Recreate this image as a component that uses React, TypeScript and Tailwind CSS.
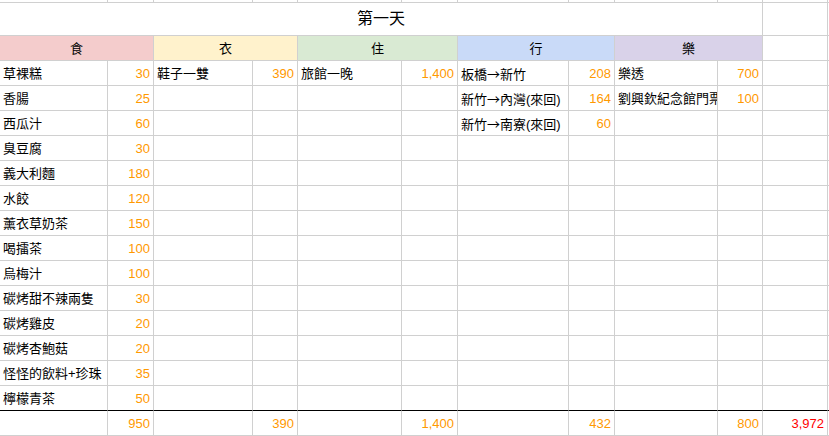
import React from "react";

type Row = [string, string, string, string, string, string, string, string, string, string];

const rows: Row[] = [
  ["草裸糕", "30", "鞋子一雙", "390", "旅館一晚", "1,400", "板橋→新竹", "208", "樂透", "700"],
  ["香腸", "25", "", "", "", "", "新竹→內灣(來回)", "164", "劉興欽紀念館門票", "100"],
  ["西瓜汁", "60", "", "", "", "", "新竹→南寮(來回)", "60", "", ""],
  ["臭豆腐", "30", "", "", "", "", "", "", "", ""],
  ["義大利麵", "180", "", "", "", "", "", "", "", ""],
  ["水餃", "120", "", "", "", "", "", "", "", ""],
  ["薰衣草奶茶", "150", "", "", "", "", "", "", "", ""],
  ["喝擂茶", "100", "", "", "", "", "", "", "", ""],
  ["烏梅汁", "100", "", "", "", "", "", "", "", ""],
  ["碳烤甜不辣兩隻", "30", "", "", "", "", "", "", "", ""],
  ["碳烤雞皮", "20", "", "", "", "", "", "", "", ""],
  ["碳烤杏鮑菇", "20", "", "", "", "", "", "", "", ""],
  ["怪怪的飲料+珍珠", "35", "", "", "", "", "", "", "", ""],
  ["檸檬青茶", "50", "", "", "", "", "", "", "", ""],
];

const totals = ["", "950", "", "390", "", "1,400", "", "432", "", "800"];

const renderText = (t: string) => {
  if (!t.includes("→")) return t;
  const parts = t.split("→");
  return (
    <>
      {parts[0]}
      <span className="font-['Noto_Sans_CJK_TC',sans-serif]">→</span>
      {parts[1]}
    </>
  );
};

const Name = ({ t, last }: { t: string; last?: boolean }) => (
  <div
    className={`h-[25px] border-r border-b border-r-[#d0d0d0] ${last ? "border-b-black" : "border-b-[#d0d0d0]"} flex items-center pl-[3px] pt-[2px] overflow-hidden whitespace-nowrap text-[13px] text-black`}
  >
    <span className="whitespace-nowrap">{renderText(t)}</span>
  </div>
);

const Num = ({ t, last, red }: { t: string; last?: boolean; red?: boolean }) => (
  <div
    className={`h-[25px] border-r border-b border-r-[#d0d0d0] ${last ? "border-b-black" : "border-b-[#d0d0d0]"} flex items-center justify-end pr-[3px] pt-[2px] overflow-hidden whitespace-nowrap text-[13px] ${red ? "text-[#ff0000]" : "text-[#ff9900]"}`}
  >
    {t}
  </div>
);

const Filler = ({ h, last }: { h: string; last?: boolean }) => (
  <div className={`${h} border-b ${last ? "border-b-black" : "border-b-[#d0d0d0]"}`} />
);

export default function App() {
  const headers = [
    { t: "食", c: "bg-[#f4cccc]" },
    { t: "衣", c: "bg-[#fff2cc]" },
    { t: "住", c: "bg-[#d9ead3]" },
    { t: "行", c: "bg-[#c9daf8]" },
    { t: "樂", c: "bg-[#d9d2e9]" },
  ];
  return (
    <div className="w-[829px] h-[436px] bg-white overflow-hidden grid grid-cols-[108px_46px_99px_45px_104px_56px_111px_46px_103px_45px_65px_1px] font-['Liberation_Sans','Noto_Sans_CJK_TC',sans-serif]">
      {/* partial top row */}
      {Array.from({ length: 11 }).map((_, i) => (
        <div key={`t${i}`} className="h-[3px] border-r border-b border-[#d0d0d0]" />
      ))}
      <Filler h="h-[3px]" />

      {/* title */}
      <div className="col-span-10 h-[33px] border-r border-b border-[#d0d0d0] flex items-center justify-center text-[16px] text-black">
        第一天
      </div>
      <div className="h-[33px] border-r border-b border-[#d0d0d0]" />
      <Filler h="h-[33px]" />

      {/* headers */}
      {headers.map((h) => (
        <div
          key={h.t}
          className={`col-span-2 h-[25px] border-r border-b border-[#d0d0d0] ${h.c} flex items-center justify-center pt-[2px] text-[13px] text-black`}
        >
          {h.t}
        </div>
      ))}
      <div className="h-[25px] border-r border-b border-[#d0d0d0]" />
      <Filler h="h-[25px]" />

      {/* data */}
      {rows.map((r, ri) => {
        const last = ri === rows.length - 1;
        return (
          <React.Fragment key={ri}>
            {r.map((v, ci) =>
              ci % 2 === 0 ? (
                <Name key={ci} t={v} last={last} />
              ) : (
                <Num key={ci} t={v} last={last} />
              )
            )}
            <Num t="" last={last} />
            <Filler h="h-[25px]" last={last} />
          </React.Fragment>
        );
      })}

      {/* totals */}
      {totals.map((v, ci) =>
        ci % 2 === 0 ? <Name key={`s${ci}`} t={v} /> : <Num key={`s${ci}`} t={v} />
      )}
      <Num t="3,972" red />
      <Filler h="h-[25px]" />
    </div>
  );
}
